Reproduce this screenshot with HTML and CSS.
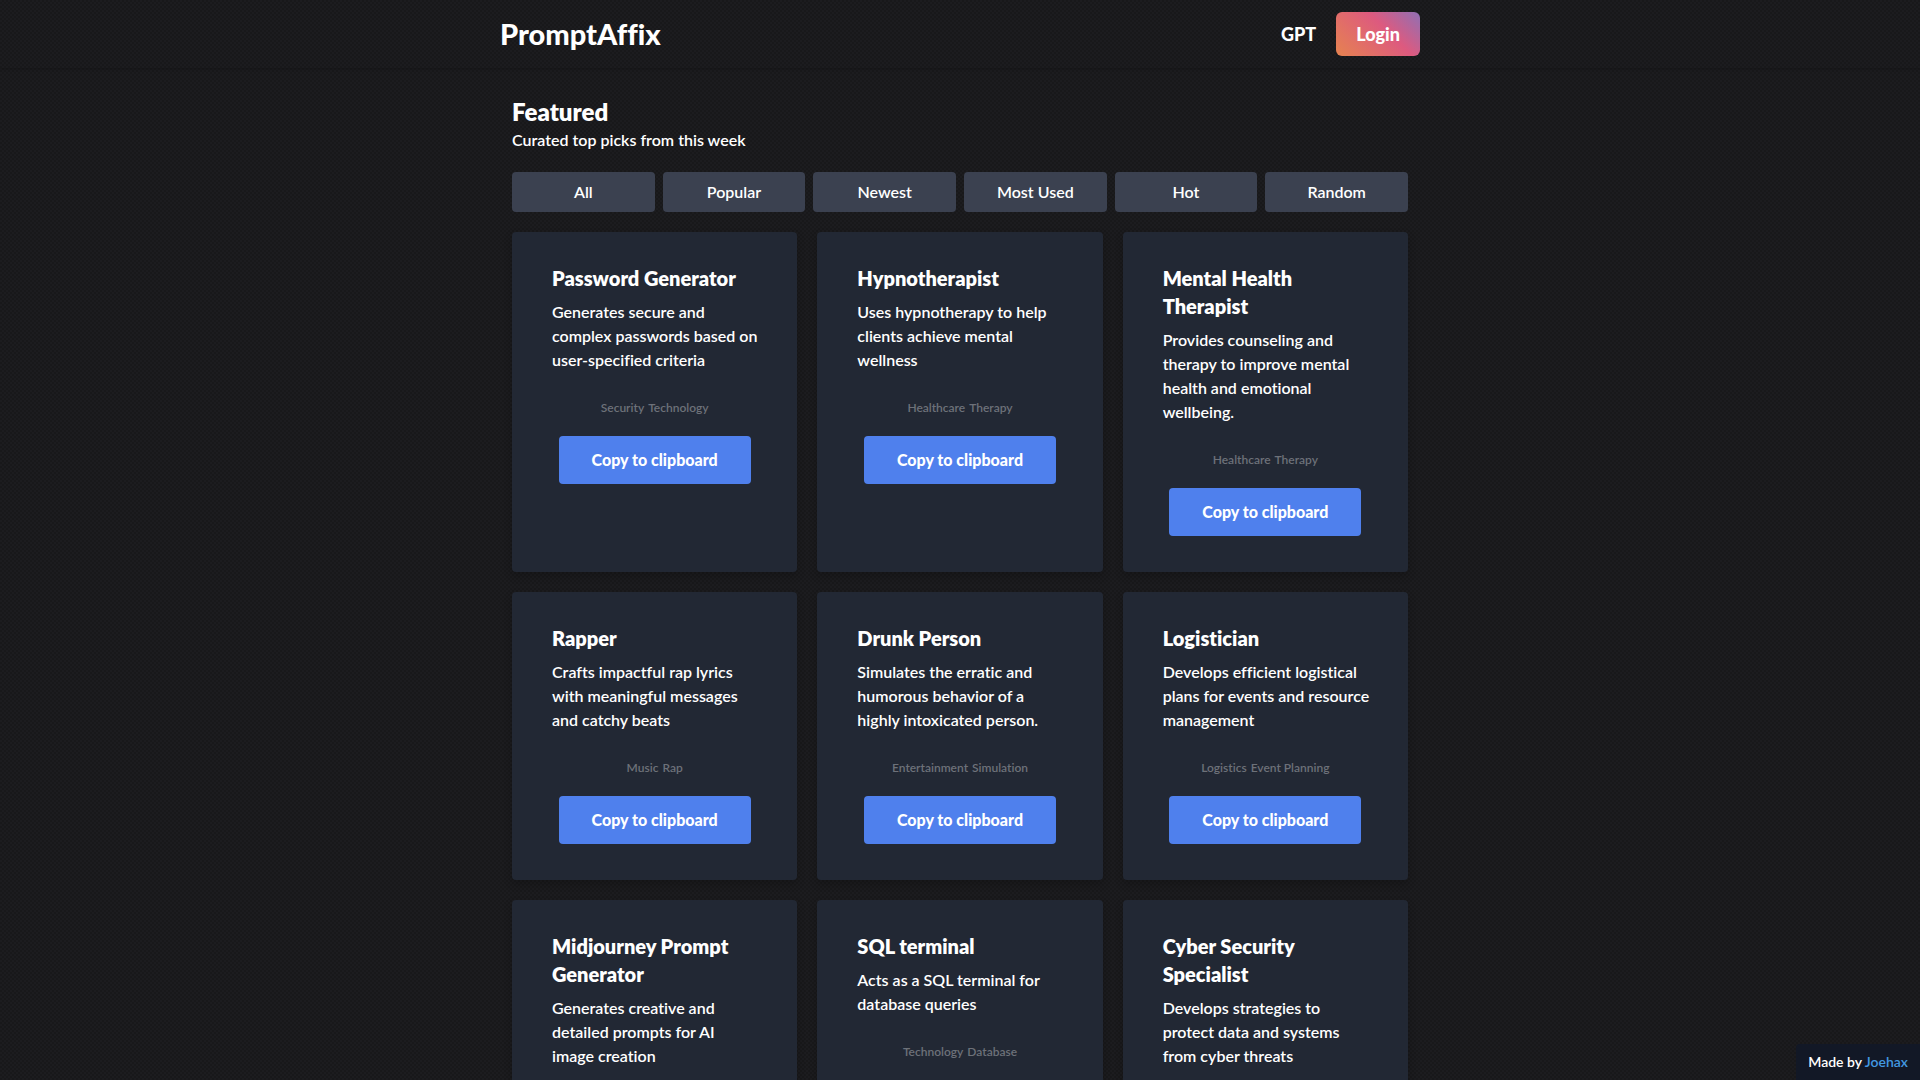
FILE: index.html
```html
<!DOCTYPE html>
<html lang="en">
<head>
<meta charset="utf-8">
<meta name="viewport" content="width=device-width, initial-scale=1">
<title>PromptAffix</title>
<link rel="stylesheet" href="styles.css">
</head>
<body>
<header class="site-header">
  <div class="header-inner">
    <a class="logo" href="#">PromptAffix</a>
    <nav class="nav">
      <a class="nav-link" href="#">GPT</a>
      <button class="login" type="button">Login</button>
    </nav>
  </div>
</header>
<main class="main">
  <h1 class="heading">Featured</h1>
  <p class="subheading">Curated top picks from this week</p>
  <div class="filters">
    <button class="filter" type="button">All</button>
    <button class="filter" type="button">Popular</button>
    <button class="filter" type="button">Newest</button>
    <button class="filter" type="button">Most Used</button>
    <button class="filter" type="button">Hot</button>
    <button class="filter" type="button">Random</button>
  </div>
  <div class="cards">
    <article class="card">
      <h2 class="card-title">Password Generator</h2>
      <p class="card-text">Generates secure and<br>complex passwords based on<br>user-specified criteria</p>
      <p class="tags"><span>Security</span><span>Technology</span></p>
      <button class="copy" type="button">Copy to clipboard</button>
    </article>
    <article class="card">
      <h2 class="card-title">Hypnotherapist</h2>
      <p class="card-text">Uses hypnotherapy to help<br>clients achieve mental<br>wellness</p>
      <p class="tags"><span>Healthcare</span><span>Therapy</span></p>
      <button class="copy" type="button">Copy to clipboard</button>
    </article>
    <article class="card">
      <h2 class="card-title">Mental Health<br>Therapist</h2>
      <p class="card-text">Provides counseling and<br>therapy to improve mental<br>health and emotional<br>wellbeing.</p>
      <p class="tags"><span>Healthcare</span><span>Therapy</span></p>
      <button class="copy" type="button">Copy to clipboard</button>
    </article>
    <article class="card">
      <h2 class="card-title">Rapper</h2>
      <p class="card-text">Crafts impactful rap lyrics<br>with meaningful messages<br>and catchy beats</p>
      <p class="tags"><span>Music</span><span>Rap</span></p>
      <button class="copy" type="button">Copy to clipboard</button>
    </article>
    <article class="card">
      <h2 class="card-title">Drunk Person</h2>
      <p class="card-text">Simulates the erratic and<br>humorous behavior of a<br>highly intoxicated person.</p>
      <p class="tags"><span>Entertainment</span><span>Simulation</span></p>
      <button class="copy" type="button">Copy to clipboard</button>
    </article>
    <article class="card">
      <h2 class="card-title">Logistician</h2>
      <p class="card-text">Develops efficient logistical<br>plans for events and resource<br>management</p>
      <p class="tags"><span>Logistics</span><span>Event Planning</span></p>
      <button class="copy" type="button">Copy to clipboard</button>
    </article>
    <article class="card">
      <h2 class="card-title">Midjourney Prompt<br>Generator</h2>
      <p class="card-text">Generates creative and<br>detailed prompts for AI<br>image creation</p>
    </article>
    <article class="card">
      <h2 class="card-title">SQL terminal</h2>
      <p class="card-text">Acts as a SQL terminal for<br>database queries</p>
      <p class="tags"><span>Technology</span><span>Database</span></p>
    </article>
    <article class="card">
      <h2 class="card-title">Cyber Security<br>Specialist</h2>
      <p class="card-text">Develops strategies to<br>protect data and systems<br>from cyber threats</p>
    </article>
  </div>
</main>
<aside class="credit">Made by <a class="credit-link" href="#">Joehax</a></aside>
</body>
</html>
```
FILE: styles.css
```css
* { box-sizing: border-box; }

html { height: 100%; overflow: hidden; }

body {
  margin: 0;
  height: 100%;
  overflow: hidden;
  color: #fff;
  font: 600 16px/24px Lato, "Open Sans", sans-serif;
  font-variant-ligatures: none;
  background-color: #18181a;
  background-image:
    radial-gradient(circle at 1px 1px, #1c1c1f 1px, transparent 1px),
    radial-gradient(circle at 3px 3px, #1c1c1f 1px, transparent 1px);
  background-size: 4px 4px;
}

h1, h2, p { margin: 0; }
a { color: inherit; text-decoration: none; }
button { border: 0; padding: 0; color: inherit; font: inherit; font-variant-ligatures: none; cursor: pointer; }

.site-header { box-shadow: 0 1px 3px rgba(0, 0, 0, .2); }

.header-inner {
  display: flex;
  align-items: center;
  justify-content: space-between;
  max-width: 960px;
  margin: 0 auto;
  padding: 12px 20px;
}

.logo { font-size: 29px; line-height: 36px; font-weight: 900; }
.nav { display: flex; align-items: center; gap: 20px; font-size: 18px; font-weight: 900; }

.login {
  padding: 10px 20px;
  border-radius: 6px;
  background: linear-gradient(45deg, #e6834f, #dd5a7f 60%, #8f70b5);
}

.main { max-width: 896px; margin: 0 auto; padding-top: 28px; }
.heading { font-size: 24px; line-height: 32px; font-weight: 800; }

.filters {
  display: grid;
  grid-template-columns: repeat(6, minmax(0, 1fr));
  gap: 8px;
  margin: 20px 0;
}

.filter { height: 40px; border-radius: 4px; background: #3b4150; }

.cards { display: grid; grid-template-columns: repeat(3, minmax(0, 1fr)); gap: 20px; }

.card {
  display: flex;
  flex-direction: column;
  align-items: center;
  padding: 32px 40px 36px;
  border-radius: 4px;
  background: #222834;
  box-shadow: 0 4px 8px rgba(0, 0, 0, .2);
}

.card-title { align-self: stretch; margin-bottom: 8px; font-size: 20px; line-height: 28px; font-weight: 800; white-space: nowrap; }
.card-text { align-self: stretch; margin-bottom: 28px; white-space: nowrap; }

.tags {
  display: flex;
  gap: 4px;
  margin-bottom: 20px;
  color: #6d7179;
  font-size: 12px;
  line-height: 16px;
}

.copy { width: 192px; height: 48px; border-radius: 4px; background: #4f80ed; font-weight: 900; }

.credit {
  position: fixed;
  right: 0;
  bottom: 0;
  padding: 6px 12px;
  border-top-left-radius: 4px;
  background: #121826;
  font-size: 14px;
}

.credit-link { color: #4299e1; }
```
